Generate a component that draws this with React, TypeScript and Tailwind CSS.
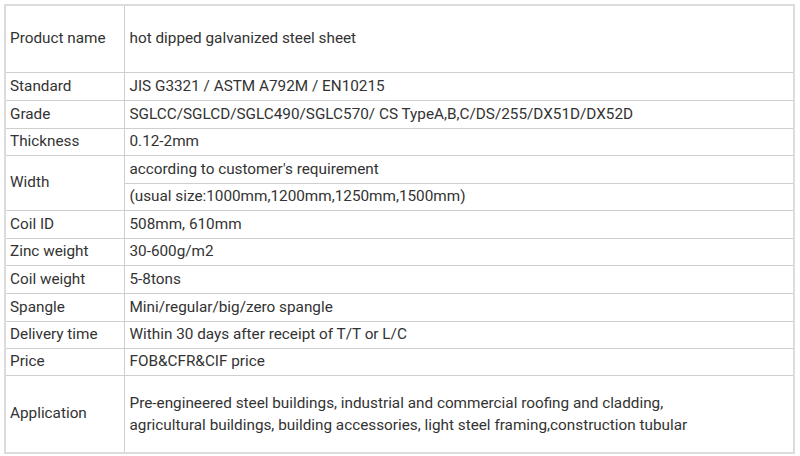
import React from "react";

const rows: { label: string; value: React.ReactNode; h: number }[] = [
  { label: "Product name", value: "hot dipped galvanized steel sheet", h: 67 },
  { label: "Standard", value: "JIS G3321 / ASTM A792M / EN10215", h: 28 },
  { label: "Grade", value: "SGLCC/SGLCD/SGLC490/SGLC570/ CS TypeA,B,C/DS/255/DX51D/DX52D", h: 28 },
  { label: "Thickness", value: "0.12-2mm", h: 27 },
];

const rows2: { label: string; value: React.ReactNode; h: number }[] = [
  { label: "Coil ID", value: "508mm, 610mm", h: 28 },
  { label: "Zinc weight", value: "30-600g/m2", h: 27 },
  { label: "Coil weight", value: "5-8tons", h: 28 },
  { label: "Spangle", value: "Mini/regular/big/zero spangle", h: 28 },
  { label: "Delivery time", value: "Within 30 days after receipt of T/T or L/C", h: 27 },
  { label: "Price", value: "FOB&CFR&CIF price", h: 27 },
];

const td = "border border-[#cfcfcf] align-middle p-0 pl-[4px]";
const tv = "border border-[#cfcfcf] align-middle p-0 pl-[5px]";

export default function App() {
  return (
    <div className="w-[800px] h-[456px] bg-white pt-[4px] pl-[4px]" style={{ fontFamily: "Roboto, 'Noto Sans', sans-serif" }}>
      <table className="border-collapse w-[791px] table-fixed text-[15.3px] text-[#333333] border-2 border-[#dcdcdc]">
        <colgroup>
          <col className="w-[119px]" />
          <col />
        </colgroup>
        <tbody>
          {rows.map((r) => (
            <tr key={r.label}>
              <td className={td} style={{ height: r.h }}>{r.label}</td>
              <td className={tv}>{r.value}</td>
            </tr>
          ))}
          <tr>
            <td className={td} rowSpan={2}>Width</td>
            <td className={`${tv} h-[28px]`}>according to customer's requirement</td>
          </tr>
          <tr>
            <td className={`${tv} h-[27px]`}>(usual size:1000mm,1200mm,1250mm,1500mm)</td>
          </tr>
          {rows2.map((r) => (
            <tr key={r.label}>
              <td className={td} style={{ height: r.h }}>{r.label}</td>
              <td className={tv}>{r.value}</td>
            </tr>
          ))}
          <tr>
            <td className={`${td} h-[78px]`}>Application</td>
            <td className={`${tv} leading-[22px]`}>
              Pre-engineered steel buildings, industrial and commercial roofing and cladding,
              <br />
              agricultural buildings, building accessories, light steel framing,construction tubular
            </td>
          </tr>
        </tbody>
      </table>
    </div>
  );
}
